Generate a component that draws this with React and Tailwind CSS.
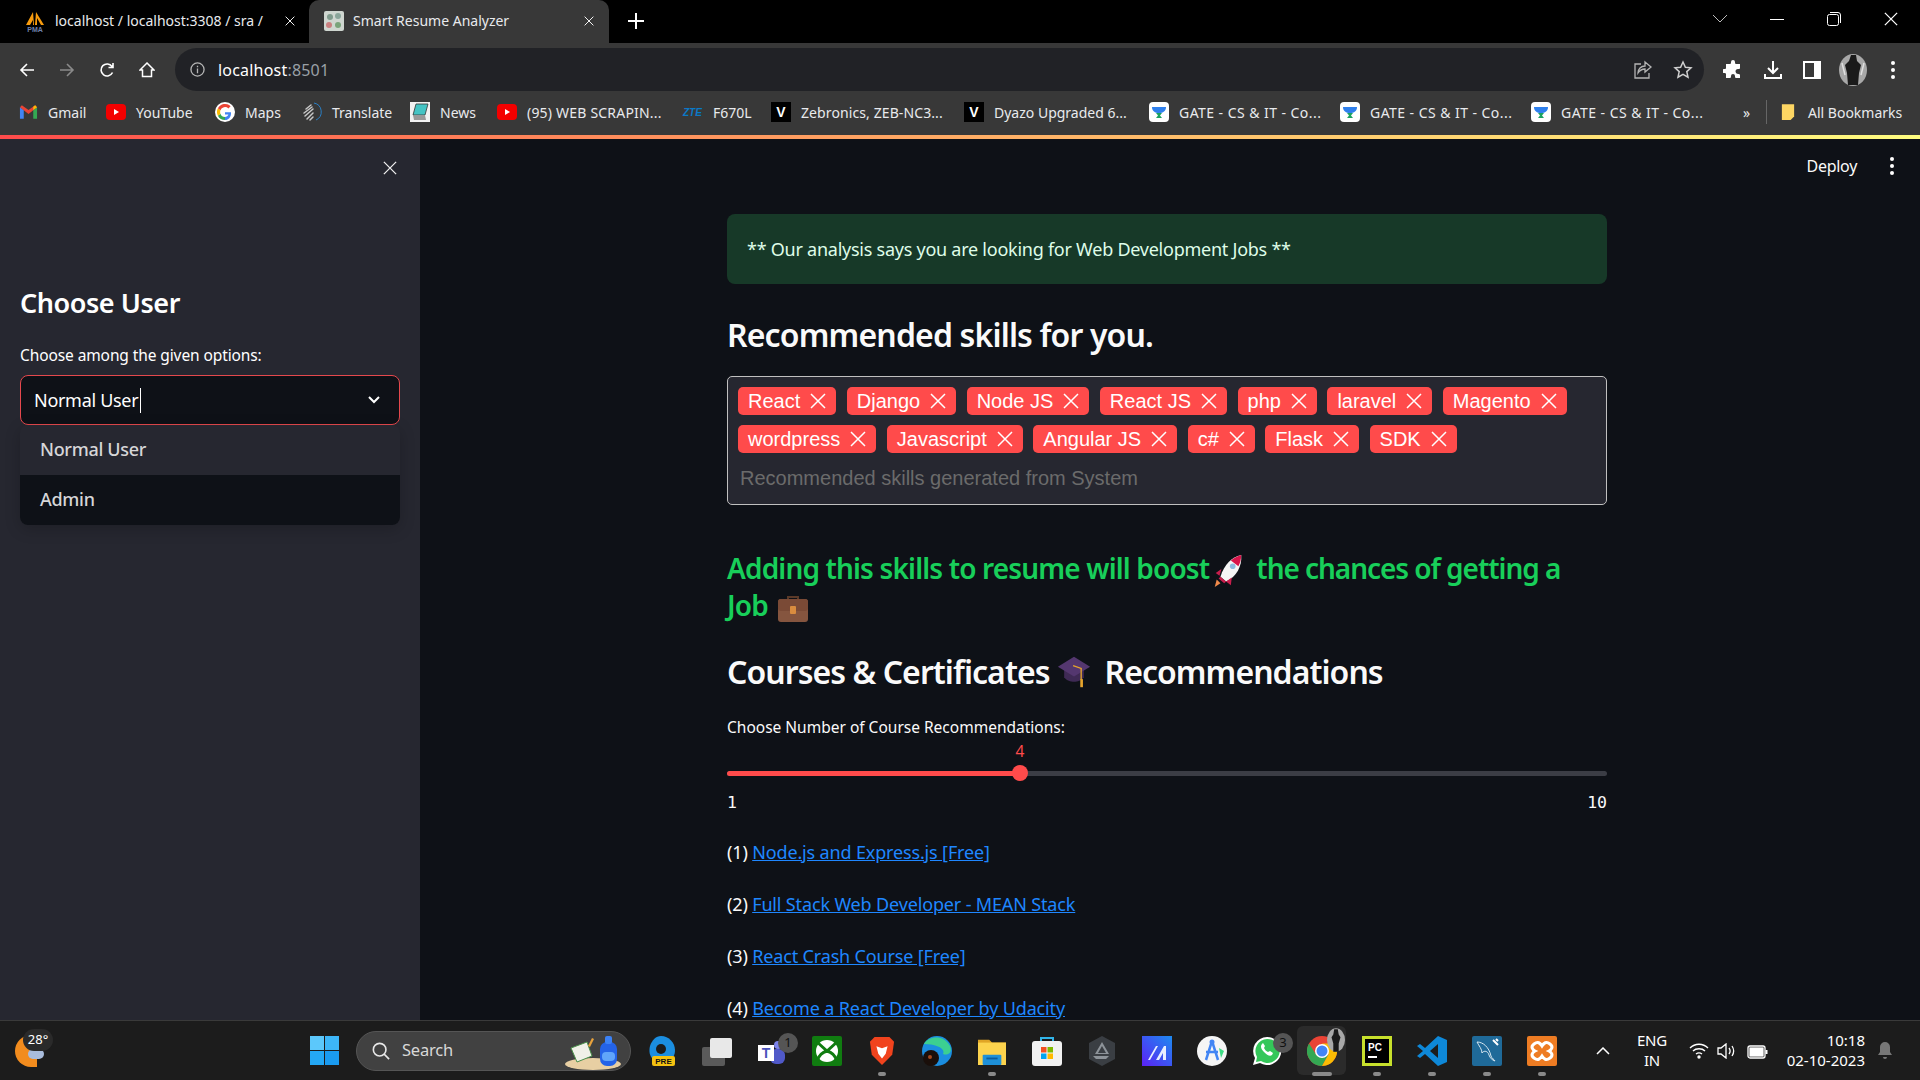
const ui = "[font-family:'Noto_Sans',sans-serif]"

const bookmarks = [
  { icon: 'gmail', name: 'Gmail', w: 'w-[37px]' },
  { icon: 'yt', name: 'YouTube', w: 'w-[58px]' },
  { icon: 'google', name: 'Maps', w: 'w-[36px]' },
  { icon: 'translate', name: 'Translate', w: 'w-[57px]' },
  { icon: 'news', name: 'News', w: 'w-[36px]' },
  { icon: 'yt', name: '(95) WEB SCRAPIN...', w: 'w-[135px] tracking-[0.2px]' },
  { icon: 'zte', name: 'F670L', w: 'w-[37px]' },
  { icon: 'v', name: 'Zebronics, ZEB-NC3...', w: 'w-[142px] tracking-[0.1px]' },
  { icon: 'v', name: 'Dyazo Upgraded 6...', w: 'w-[134px]' },
  { icon: 'gate', name: 'GATE - CS & IT - Co...', w: 'w-[140px] tracking-[0.45px]' },
  { icon: 'gate', name: 'GATE - CS & IT - Co...', w: 'w-[140px] tracking-[0.45px]' },
  { icon: 'gate', name: 'GATE - CS & IT - Co...', w: 'w-[141px] tracking-[0.45px]' },
]

const BookmarkIcon = ({ type }) => {
  if (type === 'gmail') {
    return (
      <svg viewBox="0 0 20 20" className="w-[19px] h-5">
        <path d="M1 5v12h4V8z" fill="#4285f4" />
        <path d="M15 8v9h4V5z" fill="#34a853" />
        <path d="M1 5l9 7 9-7-2-2-7 5-7-5z" fill="#ea4335" />
        <path d="M15 8l4-3-2-2-2 1.500z" fill="#fbbc04" />
      </svg>
    )
  }
  if (type === 'yt') {
    return (
      <svg viewBox="0 0 20 20" className="w-5 h-5">
        <rect x="0" y="2" width="20" height="16" rx="4" fill="#f40000" />
        <path d="M8 7l5 3-5 3z" fill="#fff" />
      </svg>
    )
  }
  if (type === 'google') {
    return (
      <svg viewBox="0 0 20 20" className="w-5 h-5">
        <circle cx="10" cy="10" r="10" fill="#fff" />
        <path d="M16 10.200H10v2.400h3.400c-.5 1.500-1.800 2.300-3.400 2.300V18c3.800 0 6.300-3 6-7.800z" fill="#4285f4" />
        <path d="M10 14.900a5 5 0 0 1-4.600-3.200l-2.500 2A8 8 0 0 0 10 18z" fill="#34a853" />
        <path d="M5.400 11.700a5 5 0 0 1 0-3.400L2.900 6.300a8 8 0 0 0 0 7.400z" fill="#fbbc04" />
        <path d="M5.400 8.300A5 5 0 0 1 13.400 6.400l2.200-2.200A8 8 0 0 0 2.900 6.300z" fill="#ea4335" />
      </svg>
    )
  }
  if (type === 'translate') {
    return (
      <svg viewBox="0 0 20 20" className="w-5 h-5" fill="none">
        <path d="M12 1a9 9 0 0 1 2 17" stroke="#2b7fc4" strokeWidth="1" />
        <path d="M4 7l5-4M2 11l8-6M3 14l8-7M5 17l6-6M8 18l3-3" stroke="#c8c8c8" strokeWidth="1.500" strokeLinecap="round" />
      </svg>
    )
  }
  if (type === 'news') {
    return (
      <svg viewBox="0 0 20 20" className="w-5 h-5">
        <rect width="20" height="20" fill="#f2f2f2" />
        <path d="M6 2h12l-3 11H3z" fill="#45c4c4" stroke="#333" strokeWidth=".8" />
        <path d="M3 13h12l1 5H4z" fill="#999" />
      </svg>
    )
  }
  if (type === 'zte') {
    return <span className="w-5 text-[10px] font-bold italic text-[#0b79c6] [font-family:'Liberation_Sans',sans-serif]">ZTE</span>
  }
  if (type === 'v') {
    return (
      <div className="w-5 h-5 bg-black flex items-center justify-center text-white text-[14px] font-bold [font-family:'Liberation_Sans',sans-serif]">V</div>
    )
  }
  return (
    <svg viewBox="0 0 20 20" className="w-5 h-5">
      <rect width="20" height="20" rx="4" fill="#fff" />
      <path d="M3 5h14c0 4-3 6-7 6s-7-2-7-6z" fill="#2f80ed" />
      <path d="M7 11h6l-2 2.500 2 2.500H7l2-2.500z" fill="#1aa260" />
    </svg>
  )
}

const Close = ({ className }) => (
  <svg viewBox="0 0 16 16" className={className} fill="none" stroke="currentColor" strokeWidth="1.500">
    <path d="M1 1l14 14M15 1L1 15" />
  </svg>
)

const Tabs = () => (
  <div className="h-[43px] bg-black flex shrink-0 text-[14px] text-[#e8eaed]">
    <div className="w-[309px] flex items-center pl-[25px] pb-[2px]">
      <svg viewBox="0 0 20 22" className="w-5 h-[22px]">
        <path d="M1 15L8 2l1 13zM3 15L8 6v9z" fill="#f89c0e" />
        <path d="M10 15l1-13 8 13z" fill="#f89c0e" />
        <path d="M5 15l3-5v5zM12 15V8l4 7z" fill="#000" />
        <text x="10" y="21.500" textAnchor="middle" fontSize="7" fontWeight="700" fontFamily="Liberation Sans" fill="#6f80ad">PMA</text>
      </svg>
      <span className="ml-[10px] w-[210px] overflow-hidden whitespace-nowrap">localhost / localhost:3308 / sra /</span>
      <Close className="ml-[20px] w-[10px] h-[10px] text-white" />
    </div>
    <div className="w-[300px] bg-[#383838] rounded-t-[10px] flex items-center pl-[15px] pb-[2px]">
      <svg viewBox="0 0 20 20" className="w-5 h-5">
        <rect width="20" height="20" rx="2" fill="#cfd6d0" />
        <circle cx="6" cy="6" r="3" fill="#7f9a8c" />
        <circle cx="14" cy="5" r="3" fill="#8aa59a" />
        <circle cx="5" cy="14" r="3" fill="#c97f7f" />
        <circle cx="14" cy="14" r="3" fill="#79a37a" />
      </svg>
      <span className="ml-[9px] w-[231px] whitespace-nowrap">Smart Resume Analyzer</span>
      <Close className="w-[10px] h-[10px] text-white" />
    </div>
    <div className="w-[54px] flex items-center justify-center pb-[2px]">
      <svg viewBox="0 0 16 16" className="w-4 h-4" stroke="#fff" strokeWidth="2">
        <path d="M8 0v16M0 8h16" />
      </svg>
    </div>
    <div className="flex-1 flex items-center justify-end pb-[5px]">
      <svg viewBox="0 0 14 8" className="w-[14px] h-2 mr-[43px]" fill="none" stroke="#bbb"><path d="M0 0l7 7 7-7" /></svg>
      <div className="w-[14px] h-px bg-white mr-[43px]" />
      <svg viewBox="0 0 14 14" className="w-[14px] h-[14px] mr-[43px]" fill="none" stroke="#fff">
        <rect x=".5" y="2.500" width="11" height="11" rx="2" />
        <path d="M3 .5h8a2.500 2.500 0 0 1 2.500 2.500v8" />
      </svg>
      <Close className="w-[14px] h-[14px] mr-[22px] text-white" />
    </div>
  </div>
)

const Toolbar = () => (
  <div className="h-[48px] bg-[#383838] flex shrink-0 pt-[5px]">
    <div className="w-[175px] flex items-center pl-[19px] gap-[24px]">
      <svg viewBox="0 0 16 16" className="w-4 h-4" fill="none" stroke="#fff" strokeWidth="1.600"><path d="M15 8H2M8 2L2 8l6 6" /></svg>
      <svg viewBox="0 0 16 16" className="w-4 h-4" fill="none" stroke="#8a8a8a" strokeWidth="1.600"><path d="M1 8h13M8 2l6 6-6 6" /></svg>
      <svg viewBox="0 0 16 16" className="w-4 h-4" fill="none" stroke="#fff" strokeWidth="1.600"><path d="M13.500 10.500A6 6 0 1 1 13 4.500M14 1v4.500H9.500" /></svg>
      <svg viewBox="0 0 16 16" className="w-4 h-4" fill="none" stroke="#fff" strokeWidth="1.500"><path d="M8 1L1 8h2.500v6.500h9V8H15z" /></svg>
    </div>
    <div className="w-[1529px] bg-[#212226] rounded-full flex items-center pl-[15px] pr-[11px]">
      <svg viewBox="0 0 16 16" className="w-[15px] h-[15px]" fill="none" stroke="#b5b5b5" strokeWidth="1.400">
        <circle cx="8" cy="8" r="7" />
        <path d="M8 7v5M8 4v1.500" />
      </svg>
      <span className={`ml-[13px] text-[16px] text-white tracking-[0.2px] ${ui}`}>localhost<span className="text-[#9aa0a6]">:8501</span></span>
      <svg viewBox="0 0 20 20" className="ml-auto w-5 h-5" fill="none" stroke="#b5b5b5" strokeWidth="1.300">
        <path d="M8 4H2v14h14v-5" />
        <path d="M12 2l6 5-6 5V9c-3 0-5 1-7 4 0-4 3-7 7-7z" />
      </svg>
      <svg viewBox="0 0 20 20" className="ml-[20px] w-5 h-5" fill="none" stroke="#cfcfcf" strokeWidth="1.500">
        <path d="M10 2l2.400 5.200 5.600.6-4.200 3.800 1.200 5.600-5-2.900-5 2.900 1.200-5.600L2 7.800l5.600-.6z" />
      </svg>
    </div>
    <div className="flex-1 flex items-center pl-[19px]">
      <svg viewBox="0 0 20 20" className="w-5 h-5" fill="#fff">
        <path d="M8 2a2 2 0 0 1 4 0c0 1 0 2 1 2h4v4c0 1-1 1-2 1a2 2 0 0 0 0 5c1 0 2 0 2 1v3h-4c-1 0-1-1-1-2a2 2 0 0 0-4 0c0 1 0 2-1 2H3v-4c0-1-1-1-2-1a2 2 0 0 1 0-4c1 0 2 0 2-1V4h4c1 0 1-1 1-2z" />
      </svg>
      <svg viewBox="0 0 20 20" className="ml-[20px] w-5 h-5" fill="none" stroke="#fff" strokeWidth="2">
        <path d="M10 1v11M5 8l5 5 5-5M2 14v4h16v-4" />
      </svg>
      <svg viewBox="0 0 18 18" className="ml-[20px] w-[18px] h-[18px]">
        <rect width="18" height="18" fill="#fff" />
        <rect x="2" y="2" width="9" height="14" fill="#383838" />
      </svg>
      <svg viewBox="0 0 28 32" className="ml-[18px] w-[28px] h-[32px]">
        <ellipse cx="14" cy="16" rx="14" ry="16" fill="#a8a8a8" />
        <path d="M12 1h5l1 6 4 4-2 8-1 12H9L8 19 6 11l4-4z" fill="#1a1a1a" />
        <path d="M3 9l3 12M25 9l-3 12" stroke="#e0e0e0" strokeWidth="1.500" />
      </svg>
      <div className="ml-[24px] flex flex-col gap-[3px]">
        <div className="w-1 h-1 rounded-full bg-white" />
        <div className="w-1 h-1 rounded-full bg-white" />
        <div className="w-1 h-1 rounded-full bg-white" />
      </div>
    </div>
  </div>
)

const Bookmarks = () => (
  <div className={`h-[44px] bg-[#383838] flex items-center shrink-0 pl-[19px] pb-[2px] text-[14px] text-[#e8eaed] ${ui}`}>
    <div className="flex items-center gap-[21px]">
      {bookmarks.map((b, i) => (
        <div key={i} className="flex items-center gap-[10px]">
          <BookmarkIcon type={b.icon} />
          <span className={`${b.w} whitespace-nowrap`}>{b.name}</span>
        </div>
      ))}
    </div>
    <span className="ml-[41px] w-[10px] text-[14px]">»</span>
    <div className="ml-[13px] w-px h-[24px] bg-[#666]" />
    <svg viewBox="0 0 16 20" className="ml-[14px] w-[14px] h-[18px]">
      <path d="M1 1h14v14l-4 4H1z" fill="#fdd663" />
    </svg>
    <span className="ml-[13px] whitespace-nowrap">All Bookmarks</span>
  </div>
)

const Sidebar = () => (
  <div className={`w-[420px] shrink-0 bg-[#262730] relative flex flex-col pl-5 pr-5 text-white ${ui}`}>
    <div className="h-[58px] flex justify-end items-center">
      <Close className="w-[14px] h-[14px] mr-[3px] text-[#f0f0f0]" />
    </div>
    <h2 className="mt-[81px] h-[50px] flex items-center text-[27px] font-semibold tracking-[-0.45px]">Choose User</h2>
    <label className="mt-[18px] h-[20px] flex items-center text-[15.500px] tracking-[-0.1px]">Choose among the given options:</label>
    <div className="mt-[9px] h-[50px] rounded-lg border border-[#e5484d] bg-[#0e1117] flex items-center pl-[13px] pr-[19px] relative">
      <span className="text-[18px] tracking-[-0.3px]">Normal User</span>
      <div className="w-px h-[25px] bg-white ml-[2px]" />
      <svg viewBox="0 0 12 8" className="ml-auto w-[12px] h-2" fill="none" stroke="#fff" strokeWidth="2"><path d="M1 1l5 5 5-5" /></svg>
      <div className="absolute left-[-1px] top-[49px] w-[380px] rounded-lg overflow-hidden text-[18px] tracking-[-0.3px] font-medium text-[#d6d6d8] shadow-[0_4px_16px_rgba(0,0,0,0.2)]">
        <div className="h-[50px] bg-[#262730] flex items-center pl-5 pb-[1px]">Normal User</div>
        <div className="h-[50px] bg-[#0e1117] flex items-center pl-5 pb-[1px]">Admin</div>
      </div>
    </div>
  </div>
)

const skills = [
  ['React', 'Django', 'Node JS', 'React JS', 'php', 'laravel', 'Magento'],
  ['wordpress', 'Javascript', 'Angular JS', 'c#', 'Flask', 'SDK'],
]

const Tag = ({ name }) => (
  <div className="h-[28px] rounded-[5px] bg-[#ff4b4b] text-white flex items-center gap-[10px] px-[10px] text-[20px]">
    {name}
    <Close className="w-4 h-4" />
  </div>
)

const Rocket = () => (
  <svg viewBox="0 0 34 36" className="inline-block w-[34px] h-[34px] align-middle -my-[4px] ml-[2px] mr-[11px]">
    <path d="M31 1C21 3 13 11 9 24l6 5C26 24 32 13 31 1z" fill="#f5f5f5" />
    <path d="M31 1c-4 1-8 3-11 6l8 6c2-4 3-8 3-12z" fill="#d8144a" />
    <path d="M9 24l6 5-2 2-6-5zM10 16l-6 4 4 3zM21 25l-1 8-5-4z" fill="#c81e4d" />
    <circle cx="22" cy="13" r="3" fill="#8dbbe0" />
    <path d="M5 27l4 4-6 4z" fill="#f08a4b" />
  </svg>
)

const Briefcase = () => (
  <svg viewBox="0 0 30 28" className="inline-block w-[30px] h-[28px] align-middle -my-[4px] ml-[10px]">
    <path d="M10 6V3h10v3" fill="none" stroke="#5b3a29" strokeWidth="2" />
    <rect x="0" y="5" width="30" height="23" rx="3" fill="#85553f" />
    <rect x="0" y="5" width="30" height="12" rx="3" fill="#7a4a36" />
    <rect x="12" y="12" width="6" height="8" rx="1" fill="#d98c3f" />
  </svg>
)

const GradCap = () => (
  <svg viewBox="0 0 36 38" className="block w-[36px] h-[34px] ml-[6px] mr-[13px]">
    <path d="M7 15v10c3 4 7 5 11 5s8-1 11-5V15z" fill="#3f2a55" />
    <path d="M18 2L0 13l18 11 18-11z" fill="#54376f" />
    <path d="M17 12l9 3v13" fill="none" stroke="#e7a52d" strokeWidth="1.500" />
    <path d="M25 27h3v9h-3z" fill="#e7a52d" />
  </svg>
)

const links = [
  'Node.js and Express.js [Free]',
  'Full Stack Web Developer - MEAN Stack',
  'React Crash Course [Free]',
  'Become a React Developer by Udacity',
]

const Main = () => (
  <div className={`flex-1 relative overflow-hidden bg-[#0e1117] text-[#fafafa] ${ui}`}>
    <div className="absolute top-[15px] right-[20px] flex items-center text-[16px] tracking-[-0.3px]">
      Deploy
      <div className="ml-[33px] flex flex-col gap-[3px] mr-[6px]">
        <div className="w-1 h-1 rounded-full bg-white" />
        <div className="w-1 h-1 rounded-full bg-white" />
        <div className="w-1 h-1 rounded-full bg-white" />
      </div>
    </div>
    <div className="ml-[307px] w-[880px] pt-[75px]">
      <div className="h-[70px] rounded-lg bg-[#173928] text-[#dffde9] flex items-center pl-5 text-[18px] tracking-[-0.25px]">
        ** Our analysis says you are looking for Web Development Jobs **
      </div>
      <h2 className="mt-[26px] h-[50px] flex items-center text-[32px] font-semibold tracking-[-0.85px]">Recommended skills for you.</h2>
      <div className="mt-4 h-[129px] rounded-[5px] border border-[#c0c0c0] bg-[#262730] pt-[10px] pl-[10px] [font-family:'Liberation_Sans',sans-serif]">
        <div className="flex flex-col gap-[10px]">
          {skills.map((row, i) => (
            <div key={i} className="flex gap-[10.500px]">
              {row.map(s => <Tag key={s} name={s} />)}
            </div>
          ))}
        </div>
        <div className="mt-[11px] pl-[2px] h-[28px] flex items-center text-[20px] text-[#6b6b6b]">Recommended skills generated from System</div>
      </div>
      <p className="mt-[45px] h-[75px] text-[28px] leading-[37px] font-semibold text-[#18cf5a] tracking-[-0.85px]">
        Adding this skills to resume will boost<Rocket /><span className="tracking-[-1.05px]">the chances of getting a</span><br />Job<Briefcase />
      </p>
      <h2 className="mt-[22px] h-[50px] flex items-center whitespace-pre text-[32px] font-semibold tracking-[-0.95px]">
        Courses &amp; Certificates<GradCap />Recommendations
      </h2>
      <div className="mt-[21px] h-5 flex items-center text-[15.500px]">Choose Number of Course Recommendations:</div>
      <div className="relative pt-[33px]">
        <div className="absolute left-[286px] top-[4px] w-[14px] h-5 flex items-center justify-center text-[15.500px] text-[#ff4b4b]">4</div>
        <div className="h-[5px] rounded-full bg-[#3b3d45] relative">
          <div className="w-[293px] h-full rounded-full bg-[#ff4b4b]" />
          <div className="absolute left-[285px] top-[-6px] w-4 h-4 rounded-full bg-[#ff4b4b]" />
        </div>
        <div className="mt-[17px] h-5 flex justify-between items-center text-[16.500px] text-[#fafafa] [font-family:'DejaVu_Sans_Mono',monospace]">
          <span>1</span>
          <span>10</span>
        </div>
      </div>
      <div className="mt-[26px] flex flex-col gap-[26px] text-[18px] tracking-[-0.15px]">
        {links.map((l, i) => (
          <div key={l} className="h-[26px] flex items-center whitespace-pre">
            ({i + 1}) <a className="text-[#1f87ff] underline" href="#">{l}</a>
          </div>
        ))}
      </div>
    </div>
  </div>
)

const Pill = ({ wide }) => (
  <div className={`absolute bottom-[4px] left-1/2 -translate-x-1/2 h-[4px] rounded-full bg-[#8a8a8a] ${wide ? 'w-[20px]' : 'w-2'}`} />
)

const Badge = ({ n }) => (
  <div className="absolute top-[12px] left-[34px] w-5 h-5 rounded-full bg-[#555] text-[#111] text-[13px] flex items-center justify-center">{n}</div>
)

const taskIcons = [
  { k: 'edge-pre', svg: (
    <svg viewBox="0 0 30 30" className="w-[30px] h-[30px]">
      <path d="M14 0c8 0 14 7 14 14 0 5-2 8-4 9H6C2 20 2 14 3 10 5 4 9 0 14 0z" fill="#1b8ee0" />
      <circle cx="14" cy="13" r="5" fill="#1c1c1c" />
      <rect x="5" y="20" width="23" height="10" rx="2" fill="#f5c211" />
      <text x="16.500" y="28" textAnchor="middle" fontSize="8" fontWeight="700" fontFamily="Liberation Sans" fill="#111">PRE</text>
    </svg>
  ) },
  { k: 'taskview', svg: (
    <svg viewBox="0 0 30 30" className="w-[30px] h-[30px]">
      <rect x="0" y="11" width="23" height="19" rx="2" fill="#5a5a5a" />
      <rect x="8" y="2" width="22" height="20" rx="2" fill="#e8e8e8" />
    </svg>
  ) },
  { k: 'teams', badge: 1, svg: (
    <svg viewBox="0 0 30 30" className="w-[30px] h-[30px]">
      <circle cx="21" cy="9" r="4" fill="#7b83eb" />
      <rect x="13" y="13" width="15" height="15" rx="6" fill="#5059c9" />
      <rect x="1" y="9" width="16" height="16" fill="#fff" />
      <text x="9" y="22" textAnchor="middle" fontSize="14" fontWeight="700" fontFamily="Liberation Sans" fill="#4b53bc">T</text>
    </svg>
  ) },
  { k: 'xbox', svg: (
    <svg viewBox="0 0 30 30" className="w-[30px] h-[30px]">
      <rect width="30" height="30" rx="2" fill="#107c10" />
      <circle cx="15" cy="15" r="11" fill="#fff" />
      <path d="M5 6l10 9 10-9M5 25c2-6 6-9 10-10 4 1 8 4 10 10" fill="none" stroke="#107c10" strokeWidth="3" />
    </svg>
  ) },
  { k: 'brave', run: true, svg: (
    <svg viewBox="0 0 28 30" className="w-[26px] h-[30px]">
      <path d="M6 0h16l5 5-2 14-11 11L3 19 1 5z" fill="#f1431d" />
      <path d="M8 10l6 2 6-2-2 8-4 5-4-5z" fill="#fff" />
    </svg>
  ) },
  { k: 'edge', svg: (
    <svg viewBox="0 0 30 30" className="w-[30px] h-[30px]">
      <circle cx="15" cy="15" r="15" fill="#1b8ee0" />
      <path d="M2 8C6 0 22-2 28 10c3 6-2 10-7 8 3-6-8-10-19-10z" fill="#3ccf91" />
      <circle cx="9" cy="22" r="8" fill="#1a0f0a" />
      <circle cx="8" cy="21" r="2" fill="#a44a1e" />
    </svg>
  ) },
  { k: 'explorer', run: true, svg: (
    <svg viewBox="0 0 30 30" className="w-[30px] h-[28px]">
      <path d="M0 3h12l3 3h15v24H0z" fill="#e0a526" />
      <rect y="6" width="30" height="24" fill="#fcd34d" />
      <rect x="5" y="19" width="20" height="11" rx="1" fill="#1e90d8" />
      <rect x="9" y="22" width="12" height="2" fill="#0a5c9e" />
    </svg>
  ) },
  { k: 'store', svg: (
    <svg viewBox="0 0 30 30" className="w-[30px] h-[30px]">
      <path d="M9 5V2h12v3" fill="none" stroke="#31b4e8" strokeWidth="2" />
      <rect y="5" width="30" height="25" rx="3" fill="#f2f2f2" />
      <rect x="9" y="11" width="5.500" height="5.500" fill="#f25022" />
      <rect x="15.500" y="11" width="5.500" height="5.500" fill="#7fba00" />
      <rect x="9" y="17.500" width="5.500" height="5.500" fill="#00a4ef" />
      <rect x="15.500" y="17.500" width="5.500" height="5.500" fill="#ffb900" />
    </svg>
  ) },
  { k: 'hex', svg: (
    <svg viewBox="0 0 26 30" className="w-[26px] h-[30px]">
      <path d="M13 0l13 7v16l-13 7L0 23V7z" fill="#3a3e43" />
      <path d="M13 6l7 12H6zM4 20h16l-3 3H7z" fill="#8d9399" />
      <path d="M13 10l4 7H9z" fill="#3a3e43" />
    </svg>
  ) },
  { k: 'blue', svg: (
    <svg viewBox="0 0 30 30" className="w-[30px] h-[30px]">
      <defs>
        <linearGradient id="bl" x1="0" y1="1" x2="1" y2="0">
          <stop offset="0" stopColor="#5b21f5" />
          <stop offset="1" stopColor="#1d8bf0" />
        </linearGradient>
      </defs>
      <rect width="30" height="30" fill="url(#bl)" />
      <path d="M6 24l8-14h2L8 24zM14 24l8-14h2v14h-3v-7l-4 7z" fill="#e8efff" />
    </svg>
  ) },
  { k: 'android', svg: (
    <svg viewBox="0 0 30 30" className="w-[30px] h-[30px]">
      <circle cx="15" cy="15" r="15" fill="#f5f5f5" />
      <path d="M15 5L9 24M15 5l6 19M9 16h12" fill="none" stroke="#4285f4" strokeWidth="2.500" />
      <circle cx="15" cy="6" r="2.500" fill="#4285f4" />
      <path d="M22 12l5 3-3 7z" fill="#3ddc84" />
    </svg>
  ) },
  { k: 'whatsapp', badge: 3, svg: (
    <svg viewBox="0 0 30 30" className="w-[30px] h-[30px]">
      <path d="M15 1a14 14 0 0 0-12 21L1 29l7-2A14 14 0 1 0 15 1z" fill="#fff" />
      <path d="M15 3a12 12 0 0 0-10 18l-1 5 5-1A12 12 0 1 0 15 3z" fill="#34c759" />
      <path d="M10 8c-2 2-1 5 2 8s6 5 8 3l1-2-3-2-2 1c-2-1-3-2-4-4l1-2-2-3z" fill="#fff" />
    </svg>
  ) },
  { k: 'chrome', active: true, svg: (
    <svg viewBox="0 0 30 30" className="w-[30px] h-[30px]">
      <circle cx="15" cy="15" r="15" fill="#ea4335" />
      <path d="M2 7.500A15 15 0 0 0 15 30l6.500-11.500H9z" fill="#34a853" />
      <path d="M15 30A15 15 0 0 0 28 7.500H15l6.500 11z" fill="#fbbc04" />
      <circle cx="15" cy="15" r="7" fill="#fff" />
      <circle cx="15" cy="15" r="5.500" fill="#4285f4" />
    </svg>
  ) },
  { k: 'pycharm', run: true, svg: (
    <svg viewBox="0 0 30 30" className="w-[30px] h-[30px]">
      <rect width="30" height="30" fill="#c7e02c" />
      <rect x="3" y="3" width="24" height="24" fill="#000" />
      <text x="6" y="15" fontSize="10" fontWeight="700" fontFamily="Liberation Sans" fill="#fff">PC</text>
      <rect x="6" y="20" width="9" height="2" fill="#fff" />
    </svg>
  ) },
  { k: 'vscode', run: true, svg: (
    <svg viewBox="0 0 30 30" className="w-[30px] h-[30px]">
      <path d="M21 0l9 4v22l-9 4L8 18l-5 4-3-2 6-5-6-5 3-2 5 4z" fill="#0e88d8" />
      <path d="M21 8l-8 7 8 7z" fill="#1c1c1c" />
    </svg>
  ) },
  { k: 'mysql', run: true, svg: (
    <svg viewBox="0 0 30 30" className="w-[30px] h-[30px]">
      <rect width="30" height="30" rx="2" fill="#1f6a99" />
      <path d="M5 6c6 0 12 5 14 14 1 3 3 3 4 5-3-1-5-3-6-6-1-4-5-5-7-2 0-4-3-7-5-11z" fill="none" stroke="#d5e6f0" strokeWidth="1" />
      <path d="M21 4l5 5M24 3l2 2" stroke="#fff" strokeWidth="2" />
    </svg>
  ) },
  { k: 'xampp', run: true, svg: (
    <svg viewBox="0 0 30 30" className="w-[30px] h-[30px]">
      <rect width="30" height="30" rx="2" fill="#ee7c23" />
      <path d="M7 8c4-3 6-1 8 2 2-3 4-5 8-2s1 6-1 7c2 1 5 4 1 7s-6 1-8-2c-2 3-4 5-8 2s-1-6 1-7c-2-1-5-4-1-7z" fill="none" stroke="#fff" strokeWidth="3" />
    </svg>
  ) },
]

const TaskCell = ({ item }) => (
  <div className="w-[55px] h-full relative flex items-center justify-center">
    {item.active && <div className="absolute top-[5px] left-[3px] w-[49px] h-[49px] rounded-md bg-[#2b2b2b]" />}
    <div className="relative flex">{item.svg}</div>
    {item.active && (
      <svg viewBox="0 0 20 26" className="absolute top-[7px] left-[33px] w-[18px] h-[24px]">
        <ellipse cx="10" cy="13" rx="10" ry="13" fill="#a8a8a8" />
        <path d="M8 1h4l1 6 2 3-2 7v9H7v-9L5 10l2-3z" fill="#1a1a1a" />
      </svg>
    )}
    {item.badge && <Badge n={item.badge} />}
    {item.active && <Pill wide />}
    {item.run && <Pill />}
  </div>
)

const Taskbar = () => (
  <div className={`h-[60px] shrink-0 bg-[#1c1c1c] border-t border-[#3a3a3a] flex items-center text-white ${ui}`}>
    <div className="w-[310px] pl-[15px] h-full flex items-center relative">
      <div className="w-[22px] h-[32px] rounded-l-full bg-[#f28c1e]" />
      <div className="absolute left-[28px] top-[28px] w-[16px] h-[10px] rounded-full bg-[#a9bcdc]" />
      <div className="absolute left-[23px] top-[8px] w-[30px] h-[22px] rounded-full bg-[#2a2a2a] text-[13px] flex items-center justify-center">28°</div>
    </div>
    <div className="w-[29px] h-[29px] grid grid-cols-2 gap-[1px]">
      <div className="bg-[#5cc8fb]" />
      <div className="bg-[#3db6f8]" />
      <div className="bg-[#24a8f5]" />
      <div className="bg-[#1a9bf0]" />
    </div>
    <div className="ml-[17px] w-[275px] h-[40px] rounded-full bg-[#414141] border border-[#555] flex items-center pl-[15px] relative text-[16.500px] text-[#d8d8d8] tracking-[-0.2px]">
      <svg viewBox="0 0 20 20" className="w-[18px] h-[18px]" fill="none" stroke="#e8e8e8" strokeWidth="1.800">
        <circle cx="8.500" cy="8.500" r="7" />
        <path d="M13.500 13.500L19 19" />
      </svg>
      <span className="ml-[12px]">Search</span>
      <svg viewBox="0 0 58 36" className="absolute right-[8px] top-[2px] w-[58px] h-[36px]">
        <ellipse cx="29" cy="30" rx="28" ry="6" fill="#e8cfa3" />
        <path d="M7 14l16-6 5 14-15 6z" fill="#f0f0e8" stroke="#4a8f4a" />
        <path d="M24 12l4-8 2 1-4 8z" fill="#e8a23c" />
        <rect x="36" y="8" width="17" height="24" rx="7" fill="#2463e8" />
        <rect x="41" y="2" width="7" height="8" rx="2" fill="#3b82f6" />
        <rect x="38" y="18" width="13" height="9" rx="4" fill="#60a5fa" />
      </svg>
    </div>
    <div className="ml-[3px] h-full flex">
      {taskIcons.map(item => <TaskCell key={item.k} item={item} />)}
    </div>
    <svg viewBox="0 0 14 8" className="ml-[27px] w-[14px] h-2" fill="none" stroke="#fff" strokeWidth="1.500"><path d="M1 7l6-6 6 6" /></svg>
    <div className="ml-[17px] w-[50px] flex flex-col items-center text-[15px] leading-[20px] tracking-[-0.2px] pb-[1px]">
      <span>ENG</span>
      <span>IN</span>
    </div>
    <svg viewBox="0 0 20 16" className="ml-[12px] w-5 h-4" fill="none" stroke="#fff" strokeWidth="1.400">
      <path d="M1 5c5-5 13-5 18 0M4 8c3-3 9-3 12 0M7 11c2-1.500 4-1.500 6 0" />
      <circle cx="10" cy="14" r="1" fill="#fff" />
    </svg>
    <svg viewBox="0 0 20 16" className="ml-[8px] w-5 h-4" fill="none" stroke="#fff" strokeWidth="1.300">
      <path d="M1 5h3l5-4v14l-5-4H1zM12 5c1.500 2 1.500 4 0 6M15 3c2 3 2 7 0 10" />
    </svg>
    <svg viewBox="0 0 22 18" className="ml-[10px] w-[22px] h-[18px]" fill="none" stroke="#fff" strokeWidth="1.300">
      <rect x="1" y="4" width="17" height="12" rx="2" />
      <rect x="3" y="6" width="13" height="8" fill="#fff" />
      <path d="M19.500 8v4" strokeWidth="2" />
    </svg>
    <div className="ml-[7px] w-[89px] flex flex-col items-end text-[15px] leading-[20px] pb-[2px]">
      <span>10:18</span>
      <span>02-10-2023</span>
    </div>
    <svg viewBox="0 0 16 18" className="ml-[12px] w-4 h-[18px]" fill="#777">
      <path d="M8 0a5 5 0 0 0-5 5v5l-2 3h14l-2-3V5a5 5 0 0 0-5-5zM6 15h4a2 2 0 0 1-4 0z" />
    </svg>
  </div>
)

export default () => (
  <div className={`w-[1920px] h-[1080px] overflow-hidden flex flex-col bg-black ${ui}`}>
    <Tabs />
    <Toolbar />
    <Bookmarks />
    <div className="h-1 shrink-0 bg-gradient-to-r from-[#ff4b4b] to-[#fffd80]" />
    <div className="flex-1 min-h-0 flex">
      <Sidebar />
      <Main />
    </div>
    <Taskbar />
  </div>
)
